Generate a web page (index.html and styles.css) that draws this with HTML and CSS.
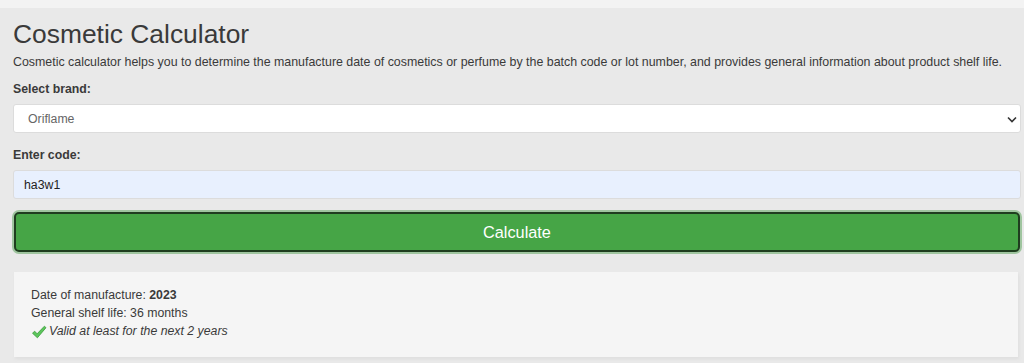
FILE: index.html
```html
<!DOCTYPE html>
<html lang="en">
<head>
    <meta charset="UTF-8">
    <meta name="viewport" content="width=device-width, initial-scale=1.0">
    <title>Cosmetic Calculator</title>
    <link rel="stylesheet" href="styles.css">
</head>
<body>
    <div class="topbar"></div>
    <section class="calc">
        <h1 class="title">Cosmetic Calculator</h1>
        <p class="intro">Cosmetic calculator helps you to determine the manufacture date of cosmetics or perfume by the batch code or lot number, and provides general information about product shelf life.</p>
        <form class="calc-form">
            <label class="field-label first" for="brand">Select brand:</label>
            <div class="select-wrap">
                <select id="brand" class="field select">
                    <option>Oriflame</option>
                </select>
                <svg class="chevron" width="10" height="7" viewBox="0 0 10 7"><path d="M1 1.5l4 4 4-4" fill="none" stroke="#333" stroke-width="1.6"/></svg>
            </div>
            <label class="field-label" for="code">Enter code:</label>
            <input id="code" class="field code" type="text" value="ha3w1">
            <button type="button" class="btn-calc">Calculate</button>
        </form>
        <div class="result">
            <div>Date of manufacture: <b>2023</b></div>
            <div>General shelf life: 36 months</div>
            <div class="valid">
                <svg class="check" width="16" height="14" viewBox="0 0 16 14"><path d="M1.5 8.2l2.2-2 2.4 2.6L13.4 1.2l1.6 1.5-8.6 10.1z" fill="#5cc65c" stroke="#3a9a3a" stroke-width="0.8" stroke-linejoin="round"/></svg>
                <i>Valid at least for the next 2 years</i>
            </div>
        </div>
    </section>
</body>
</html>
```

FILE: styles.css
```css
* {
    margin: 0;
    padding: 0;
    box-sizing: border-box;
}
body {
    background-color: #e9e9e9;
    font-family: "Liberation Sans", Arial, sans-serif;
    color: #3a3a3a;
}
.topbar {
    height: 8px;
    background-color: #f3f3f3;
}
.calc {
    padding: 9px 3px 6px 13px;
}
.title {
    font-size: 26.4px;
    font-weight: normal;
    line-height: 34px;
    color: #3a3a3a;
}
.intro {
    font-size: 12.4px;
    line-height: 18px;
    margin-top: 2px;
    color: #3a3a3a;
    white-space: nowrap;
}
.calc-form {
    display: flex;
    flex-direction: column;
}
.field-label {
    font-size: 12.3px;
    font-weight: bold;
    line-height: 18px;
    margin-top: 13px;
    margin-bottom: 6px;
}
.field-label.first {
    margin-top: 9px;
}
.select-wrap {
    position: relative;
}
.field {
    width: 100%;
    height: 29px;
    border: 1px solid #dcdcdc;
    border-radius: 3px;
    font-family: "Liberation Sans", Arial, sans-serif;
    font-size: 12.3px;
    color: #555;
}
.select {
    appearance: none;
    background-color: #fff;
    padding-left: 14px;
    color: #666;
}
.chevron {
    position: absolute;
    right: 4px;
    top: 12px;
}
.code {
    background-color: #e8f0fe;
    padding-left: 10px;
    color: #222;
    margin-bottom: 13px;
}
.btn-calc {
    height: 40px;
    background-color: #46a546;
    border: 2px solid #1f3d1f;
    border-radius: 5px;
    box-shadow: 0 0 0 2px #9fc59f;
    color: #fff;
    font-family: "Liberation Sans", Arial, sans-serif;
    font-size: 16.3px;
    margin: 0 1px;
}
.result {
    margin: 20px 3px 0 1px;
    background-color: #f5f5f5;
    padding: 14px 17px 17px;
    font-size: 12.3px;
    line-height: 18px;
    color: #3a3a3a;
    box-shadow: 1px 2px 3px #dedede;
}
.valid {
    display: flex;
    align-items: center;
    gap: 2px;
}
.check {
    margin-top: 2px;
}
```
